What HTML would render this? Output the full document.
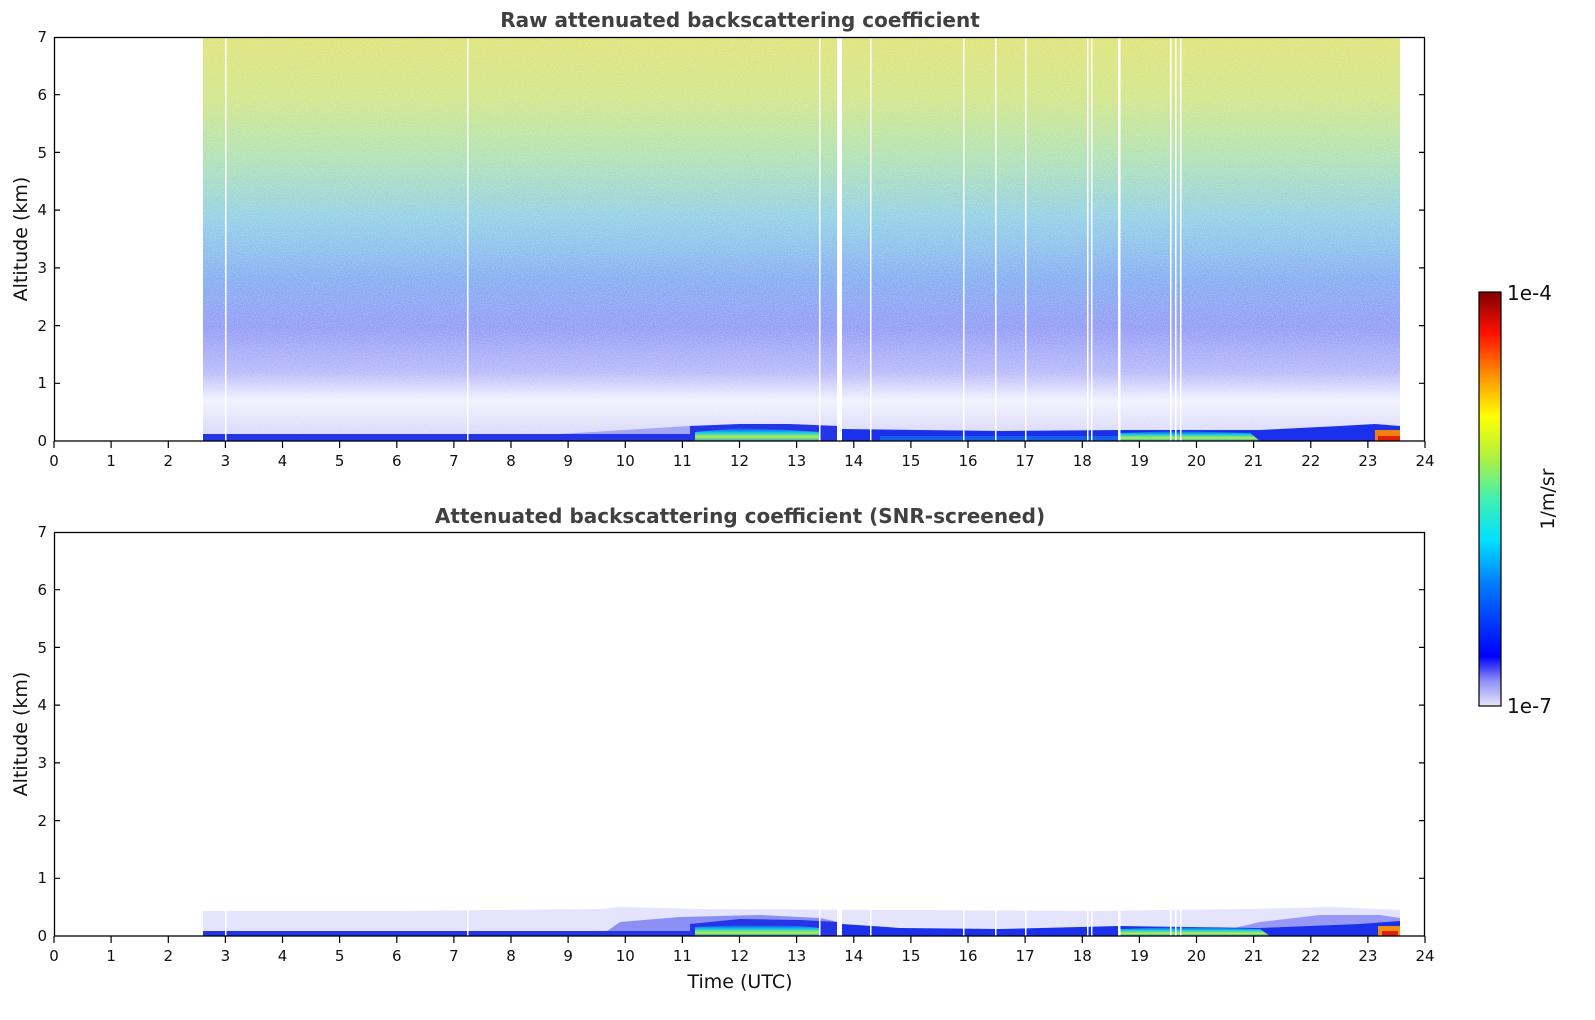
<!DOCTYPE html>
<html><head><meta charset="utf-8"><style>
html,body{margin:0;padding:0;background:#fff;overflow:hidden;width:1595px;height:1020px;}
svg{display:block;font-family:"DejaVu Sans","Liberation Sans",sans-serif;}
.t{font-size:15px;fill:#111;}
</style></head><body>
<svg width="1595" height="1020" viewBox="0 0 1595 1020" xmlns="http://www.w3.org/2000/svg">
<defs>
<linearGradient id="g1" x1="0" y1="0" x2="0" y2="1">
<stop offset="0" stop-color="#dfe47a"/>
<stop offset="0.15" stop-color="#d2e68a"/>
<stop offset="0.3" stop-color="#b0e2b4"/>
<stop offset="0.45" stop-color="#94d0e6"/>
<stop offset="0.6" stop-color="#86aef3"/>
<stop offset="0.72" stop-color="#949cf6"/>
<stop offset="0.83" stop-color="#b8bbfa"/>
<stop offset="0.9" stop-color="#f2f2fe"/>
<stop offset="0.95" stop-color="#e2e2fb"/>
<stop offset="1" stop-color="#d4d4f8"/>
</linearGradient>
<linearGradient id="jet" x1="0" y1="1" x2="0" y2="0">
<stop offset="0" stop-color="#e6e6fa"/>
<stop offset="0.06" stop-color="#9090f6"/>
<stop offset="0.12" stop-color="#0000ff"/>
<stop offset="0.3" stop-color="#0080ff"/>
<stop offset="0.4" stop-color="#00e0ff"/>
<stop offset="0.5" stop-color="#40f0b0"/>
<stop offset="0.6" stop-color="#b0f040"/>
<stop offset="0.7" stop-color="#ffff00"/>
<stop offset="0.8" stop-color="#ff9000"/>
<stop offset="0.9" stop-color="#ff1000"/>
<stop offset="1" stop-color="#800000"/>
</linearGradient>
<linearGradient id="cg" x1="0" y1="0" x2="0" y2="1">
<stop offset="0" stop-color="#1a3cf0"/>
<stop offset="0.35" stop-color="#10c8f0"/>
<stop offset="0.7" stop-color="#b8f040"/>
<stop offset="1" stop-color="#20a0f0"/>
</linearGradient>
<filter id="nz" x="0" y="0" width="100%" height="100%">
<feTurbulence type="fractalNoise" baseFrequency="0.9" numOctaves="1" seed="3"/>
<feColorMatrix values="0 0 0 0 1  0 0 0 0 1  0 0 0 0 1  0 0 0 -2.2 1.3"/>
</filter>
</defs>

<text x="740" y="27" text-anchor="middle" font-size="20" font-weight="bold" fill="#404040">Raw attenuated backscattering coefficient</text>
<text x="740" y="523" text-anchor="middle" font-size="20" font-weight="bold" fill="#404040">Attenuated backscattering coefficient (SNR-screened)</text>

<rect x="203" y="37" width="1197" height="404" fill="url(#g1)"/>
<rect x="203" y="37" width="1197" height="404" filter="url(#nz)" opacity="0.35"/>
<polygon points="203,434 690,434 690,426 740,424 790,424 838,426 838,441 203,441" fill="#2434e6"/>
<polygon points="560,434 690,426 690,434" fill="#7a80f0" opacity="0.6"/>
<polygon points="695,441 695,432 740,428 790,430 820,432 820,441" fill="url(#cg)"/>
<polygon points="842,441 842,429 1000,431 1120,430 1260,430 1340,426 1375,424 1400,426 1400,441" fill="#1a30ea"/>
<polygon points="1120,441 1120,433 1180,431 1250,433 1260,441" fill="url(#cg)"/>
<polygon points="880,441 880,436 1120,436 1120,441" fill="#1080f0" opacity="0.6"/>
<rect x="1375" y="430" width="25" height="11" fill="#f08010"/>
<rect x="1378" y="436" width="22" height="5" fill="#e02000"/>
<g fill="#fff">
<rect x="225" y="37" width="1.5" height="404"/>
<rect x="467" y="37" width="1.5" height="404"/>
<rect x="819" y="37" width="1.5" height="404"/>
<rect x="837" y="37" width="5" height="404"/>
<rect x="870" y="37" width="1.5" height="404"/>
<rect x="963" y="37" width="1.5" height="404"/>
<rect x="995" y="37" width="1.5" height="404"/>
<rect x="1025" y="37" width="1.5" height="404"/>
<rect x="1087" y="37" width="1.5" height="404"/>
<rect x="1091" y="37" width="1.5" height="404"/>
<rect x="1118" y="37" width="2.5" height="404"/>
<rect x="1170" y="37" width="1.5" height="404"/>
<rect x="1175" y="37" width="1.5" height="404"/>
<rect x="1180" y="37" width="1.5" height="404"/>
</g>

<polygon points="203,936 203,911 400,911 600,909 620,907 700,909 900,910 1100,911 1250,909 1330,907 1400,910 1400,936" fill="#e4e4fc"/>
<polygon points="600,936 620,922 680,917 760,915 820,918 838,922 838,936" fill="#8c90f4"/>
<polygon points="1200,936 1260,922 1320,915 1380,915 1400,918 1400,936" fill="#9898f6"/>
<polygon points="203,936 203,931 690,931 690,924 740,919 800,920 838,922 838,936" fill="#2434e6"/>
<polygon points="695,936 695,927 740,925 800,926 820,928 820,936" fill="url(#cg)"/>
<polygon points="842,936 842,924 900,928 1000,929 1120,926 1260,928 1360,924 1400,921 1400,936" fill="#1a30ea"/>
<polygon points="1120,936 1120,929 1180,927 1260,929 1270,936" fill="url(#cg)"/>
<rect x="1378" y="926" width="22" height="10" fill="#f09010"/>
<rect x="1382" y="931" width="16" height="5" fill="#e02000"/>
<g fill="#fff">
<rect x="225" y="905" width="1.5" height="31"/>
<rect x="467" y="905" width="1.5" height="31"/>
<rect x="819" y="905" width="1.5" height="31"/>
<rect x="837" y="905" width="5" height="31"/>
<rect x="870" y="905" width="1.5" height="31"/>
<rect x="963" y="905" width="1.5" height="31"/>
<rect x="995" y="905" width="1.5" height="31"/>
<rect x="1025" y="905" width="1.5" height="31"/>
<rect x="1087" y="905" width="1.5" height="31"/>
<rect x="1091" y="905" width="1.5" height="31"/>
<rect x="1118" y="905" width="2.5" height="31"/>
<rect x="1170" y="905" width="1.5" height="31"/>
<rect x="1175" y="905" width="1.5" height="31"/>
<rect x="1180" y="905" width="1.5" height="31"/>
</g>

<rect x="54.5" y="37.5" width="1370" height="403.5" fill="none" stroke="#000" stroke-width="1.3"/>
<rect x="54.5" y="532.5" width="1370" height="403.5" fill="none" stroke="#000" stroke-width="1.3"/>

<g stroke="#000" stroke-width="1.2">
<path d="M54 383.3h6M54 325.6h6M54 267.9h6M54 210.1h6M54 152.4h6M54 94.7h6
M1425 383.3h-6M1425 325.6h-6M1425 267.9h-6M1425 210.1h-6M1425 152.4h-6M1425 94.7h-6
M54 878.3h6M54 820.6h6M54 762.9h6M54 705.1h6M54 647.4h6M54 589.7h6
M1425 878.3h-6M1425 820.6h-6M1425 762.9h-6M1425 705.1h-6M1425 647.4h-6M1425 589.7h-6"/>
<path d="M54 441v7M111.1 441v7M168.3 441v7M225.4 441v7M282.5 441v7M339.6 441v7M396.8 441v7M453.9 441v7M511 441v7M568.1 441v7M625.3 441v7M682.4 441v7M739.5 441v7M796.6 441v7M853.8 441v7M910.9 441v7M968 441v7M1025.1 441v7M1082.3 441v7M1139.4 441v7M1196.5 441v7M1253.6 441v7M1310.8 441v7M1367.9 441v7M1425 441v7"/>
<path d="M54 936v7M111.1 936v7M168.3 936v7M225.4 936v7M282.5 936v7M339.6 936v7M396.8 936v7M453.9 936v7M511 936v7M568.1 936v7M625.3 936v7M682.4 936v7M739.5 936v7M796.6 936v7M853.8 936v7M910.9 936v7M968 936v7M1025.1 936v7M1082.3 936v7M1139.4 936v7M1196.5 936v7M1253.6 936v7M1310.8 936v7M1367.9 936v7M1425 936v7"/>
</g>

<g class="t" text-anchor="end">
<text x="47" y="446">0</text><text x="47" y="388">1</text><text x="47" y="331">2</text><text x="47" y="273">3</text><text x="47" y="215">4</text><text x="47" y="158">5</text><text x="47" y="100">6</text><text x="47" y="42">7</text>
<text x="47" y="941">0</text><text x="47" y="883">1</text><text x="47" y="826">2</text><text x="47" y="768">3</text><text x="47" y="710">4</text><text x="47" y="653">5</text><text x="47" y="595">6</text><text x="47" y="537">7</text>
</g>
<g class="t" text-anchor="middle">
<text x="54" y="466">0</text><text x="111.1" y="466">1</text><text x="168.3" y="466">2</text><text x="225.4" y="466">3</text><text x="282.5" y="466">4</text><text x="339.6" y="466">5</text><text x="396.8" y="466">6</text><text x="453.9" y="466">7</text><text x="511" y="466">8</text><text x="568.1" y="466">9</text><text x="625.3" y="466">10</text><text x="682.4" y="466">11</text><text x="739.5" y="466">12</text><text x="796.6" y="466">13</text><text x="853.8" y="466">14</text><text x="910.9" y="466">15</text><text x="968" y="466">16</text><text x="1025.1" y="466">17</text><text x="1082.3" y="466">18</text><text x="1139.4" y="466">19</text><text x="1196.5" y="466">20</text><text x="1253.6" y="466">21</text><text x="1310.8" y="466">22</text><text x="1367.9" y="466">23</text><text x="1425" y="466">24</text>
<text x="54" y="961">0</text><text x="111.1" y="961">1</text><text x="168.3" y="961">2</text><text x="225.4" y="961">3</text><text x="282.5" y="961">4</text><text x="339.6" y="961">5</text><text x="396.8" y="961">6</text><text x="453.9" y="961">7</text><text x="511" y="961">8</text><text x="568.1" y="961">9</text><text x="625.3" y="961">10</text><text x="682.4" y="961">11</text><text x="739.5" y="961">12</text><text x="796.6" y="961">13</text><text x="853.8" y="961">14</text><text x="910.9" y="961">15</text><text x="968" y="961">16</text><text x="1025.1" y="961">17</text><text x="1082.3" y="961">18</text><text x="1139.4" y="961">19</text><text x="1196.5" y="961">20</text><text x="1253.6" y="961">21</text><text x="1310.8" y="961">22</text><text x="1367.9" y="961">23</text><text x="1425" y="961">24</text>
</g>

<text transform="translate(27,239) rotate(-90)" text-anchor="middle" font-size="19" fill="#111">Altitude (km)</text>
<text transform="translate(27,734) rotate(-90)" text-anchor="middle" font-size="19" fill="#111">Altitude (km)</text>
<text x="740" y="988" text-anchor="middle" font-size="19" fill="#111">Time (UTC)</text>

<rect x="1479" y="292" width="22" height="414" fill="url(#jet)" stroke="#000" stroke-width="1.2"/>
<text x="1507" y="300" font-size="20" fill="#111">1e-4</text>
<text x="1507" y="713" font-size="20" fill="#111">1e-7</text>
<text transform="translate(1554,499) rotate(-90)" text-anchor="middle" font-size="19" fill="#111">1/m/sr</text>
</svg>
</body></html>
